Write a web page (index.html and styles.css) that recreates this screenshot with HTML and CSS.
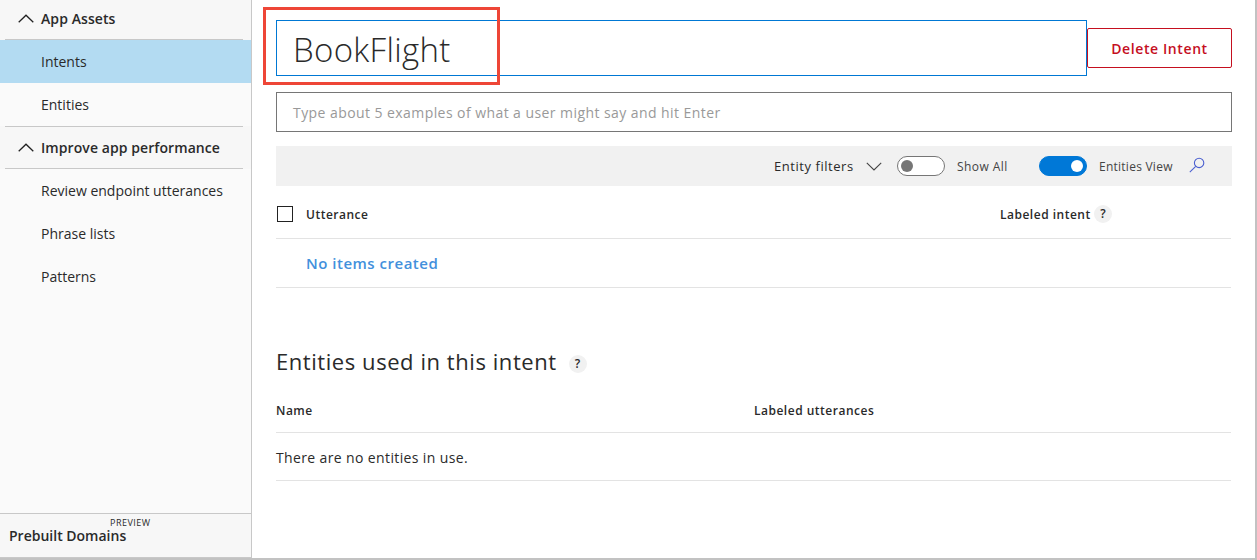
FILE: index.html
```html
<!DOCTYPE html>
<html lang="en">
<head>
<meta charset="utf-8">
<title>BookFlight intent</title>
<link rel="stylesheet" href="styles.css">
</head>
<body>
<div class="app">
  <nav class="sidebar">
    <div class="group-head first">
      <svg class="chevron" width="16" height="9" viewBox="0 0 16 9"><path d="M0.7 8.2 8 1.2l7.3 7"/></svg>
      <span>App Assets</span>
    </div>
    <a class="item active"><span>Intents</span></a>
    <a class="item"><span>Entities</span></a>
    <div class="group-head second">
      <svg class="chevron" width="16" height="9" viewBox="0 0 16 9"><path d="M0.7 8.2 8 1.2l7.3 7"/></svg>
      <span>Improve app performance</span>
    </div>
    <a class="item"><span>Review endpoint utterances</span></a>
    <a class="item"><span>Phrase lists</span></a>
    <a class="item"><span>Patterns</span></a>
    <div class="prebuilt"><span>Prebuilt Domains</span><span class="preview">PREVIEW</span></div>
  </nav>
  <main class="content">
    <div class="title-row">
      <div class="name-input"><span>BookFlight</span><div class="callout"></div></div>
      <button class="delete"><span>Delete Intent</span></button>
    </div>
    <div class="utterance-input"><span>Type about 5 examples of what a user might say and hit Enter</span></div>
    <div class="toolbar">
      <span class="filters">Entity filters</span>
      <svg class="down" width="16" height="9" viewBox="0 0 16 9"><path d="M0.8 0.8 8 8l7.2-7.2"/></svg>
      <span class="toggle"></span>
      <span class="label show">Show All</span>
      <span class="toggle on"></span>
      <span class="label view">Entities View</span>
      <svg class="search" width="16" height="16" viewBox="0 0 16 16"><circle cx="10.1" cy="5.9" r="4.7"/><path d="M6.7 9.3 0.8 15.1"/></svg>
    </div>
    <div class="table-head utterances">
      <span class="checkbox"></span>
      <span class="col-utterance">Utterance</span>
      <span class="col-labeled">Labeled intent</span>
      <span class="help">?</span>
    </div>
    <div class="empty-row"><span>No items created</span></div>
    <h2 class="section-title"><span class="section-text">Entities used in this intent</span><span class="help">?</span></h2>
    <div class="table-head entities">
      <span class="col-name">Name</span>
      <span>Labeled utterances</span>
    </div>
    <div class="none-row"><span>There are no entities in use.</span></div>
  </main>
</div>
</body>
</html>
```

FILE: styles.css
```css
* { box-sizing: border-box; }
body { margin: 0; font-family: "Open Sans", "Noto Sans", sans-serif; color: #2a2a2a; background: #fff; }
svg { fill: none; flex: none; }
span { white-space: nowrap; }
.app { width: 1257px; height: 560px; display: flex; border-right: 2px solid #c2c2c2; border-bottom: 2px solid #c2c2c2; }

.sidebar { width: 252px; flex: none; display: flex; flex-direction: column; background: #fafafa; border-right: 1px solid #c8c8c8; font-size: 14px; }
.group-head { display: flex; align-items: center; gap: 7px; padding-left: 18px; background: linear-gradient(#c8c8c8, #c8c8c8) 5px 100% / 238px 1px no-repeat #f7f7f7; font-weight: 600; letter-spacing: 0.08px; }
.first { height: 40px; padding-bottom: 3px; }
.second { height: 43px; background: linear-gradient(#c8c8c8, #c8c8c8) 5px 0 / 238px 1px no-repeat, linear-gradient(#c8c8c8, #c8c8c8) 5px 100% / 238px 1px no-repeat #f7f7f7; }
.chevron { stroke: #222; stroke-width: 1.3; }
.item { height: 43px; display: flex; align-items: center; padding-left: 41px; }
.active { background: #b3dbf2; }
.prebuilt { margin-top: auto; height: 45px; display: flex; align-items: center; padding-left: 9px; position: relative; background: #f7f7f7; border-top: 1px solid #c8c8c8; border-bottom: 1px solid #c8c8c8; font-weight: 600; line-height: 14px; }
.preview { position: absolute; left: 110px; top: 4px; font-size: 9px; line-height: 9px; font-weight: 400; letter-spacing: 0.5px; }

.content { flex: 1; padding: 20px 23px 0 24px; }
.title-row { display: flex; align-items: center; height: 56px; }
.name-input { width: 811px; height: 56px; display: flex; align-items: center; padding: 3px 0 0 16px; border: 1px solid #0078d4; position: relative; font-size: 33px; font-weight: 300; letter-spacing: 0.3px; }
.callout { position: absolute; left: -14px; top: -14px; width: 237px; height: 78px; border: 3px solid #ee4637; }
.delete { width: 145px; height: 40px; padding: 0; border: 1px solid #c50f1f; border-radius: 2px; background: #fff; color: #c50f1f; font: 600 14px "Open Sans", sans-serif; letter-spacing: 0.6px; }
.utterance-input { margin-top: 16px; height: 40px; display: flex; align-items: center; padding-left: 16px; border: 1px solid #767676; color: #999; font-size: 14px; letter-spacing: 0.43px; }
.toolbar { margin-top: 14px; height: 40px; display: flex; align-items: center; padding-left: 498px; background: #f1f1f1; font-size: 13px; }
.filters { width: 92px; letter-spacing: 0.55px; }
.down { stroke: #444; stroke-width: 1.1; }
.toggle { width: 48px; height: 20px; margin-left: 15px; padding: 3px; display: flex; border: 1px solid #767676; border-radius: 10px; background: #fff; }
.toggle::before { content: ""; width: 12px; height: 12px; border-radius: 50%; background: #767676; }
.on { margin-left: 0; border-color: #0078d7; background: #0078d7; justify-content: flex-end; }
.on::before { background: #fff; }
.label { font-size: 12px; margin-left: 12px; color: #444; letter-spacing: 0.25px; }
.show { width: 82px; letter-spacing: 0.45px; }
.view { width: 78px; }
.search { margin: -3px 0 0 12px; stroke: #4a5fd0; stroke-width: 1.1; }

.table-head { display: flex; align-items: center; border-bottom: 1px solid #e3e3e3; font-size: 12px; font-weight: 600; letter-spacing: 0.5px; }
.utterances { height: 53px; margin-right: 1px; padding: 4px 0 0 1px; }
.checkbox { width: 16px; height: 16px; margin-right: 13px; border: 1px solid #222; }
.col-utterance { width: 694px; }
.help { display: flex; justify-content: center; align-items: center; width: 18px; height: 18px; border-radius: 50%; background: #f1f1f1; font-size: 12px; font-weight: 600; line-height: 18px; letter-spacing: 0; }
.utterances .help { margin-left: 3px; }
.col-labeled { width: 91px; }
.empty-row { height: 49px; margin-right: 1px; display: flex; align-items: center; padding-left: 30px; border-bottom: 1px solid #e3e3e3; color: #4290dc; font-size: 15px; font-weight: 600; letter-spacing: 0.5px; }
.section-title { margin: 58px 0 0; height: 32px; display: flex; align-items: center; font-size: 22px; font-weight: 400; }
.section-text { width: 293px; margin-top: -3px; letter-spacing: 0.56px; }
.section-title .help { margin-top: 3px; padding-right: 1px; }
.entities { height: 55px; margin-right: 1px; padding-top: 10px; }
.col-name { width: 478px; }
.none-row { height: 48px; margin-right: 1px; display: flex; align-items: center; padding-top: 1px; border-bottom: 1px solid #e3e3e3; font-size: 14px; letter-spacing: 0.37px; }
```
